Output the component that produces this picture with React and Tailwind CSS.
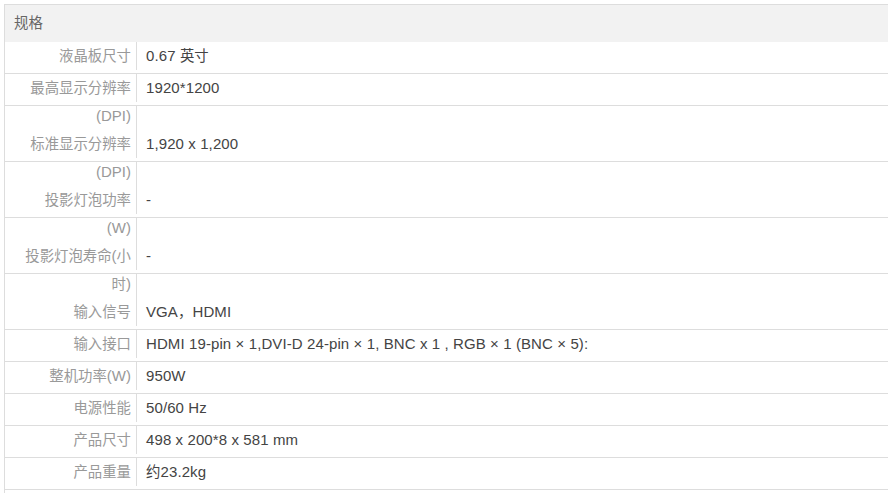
import React from "react";

const rows = [
  { tall: false, label: ["液晶板尺寸"], value: "0.67 英寸" },
  { tall: false, label: ["最高显示分辨率"], value: "1920*1200" },
  { tall: true, label: ["(DPI)", "标准显示分辨率"], value: "1,920 x 1,200" },
  { tall: true, label: ["(DPI)", "投影灯泡功率"], value: "-" },
  { tall: true, label: ["(W)", "投影灯泡寿命(小"], value: "-" },
  { tall: true, label: ["时)", "输入信号"], value: "VGA，HDMI" },
  { tall: false, label: ["输入接口"], value: "HDMI 19-pin × 1,DVI-D 24-pin × 1, BNC x 1 , RGB × 1 (BNC × 5):" },
  { tall: false, label: ["整机功率(W)"], value: "950W" },
  { tall: false, label: ["电源性能"], value: "50/60 Hz" },
  { tall: false, label: ["产品尺寸"], value: "498 x 200*8 x 581 mm" },
  { tall: false, label: ["产品重量"], value: "约23.2kg" },
];

function Mixed({ text }) {
  const parts = text.split(/([\u3000-\u9fff\uff00-\uffef]+)/).filter((p) => p !== "");
  return (
    <>
      {parts.map((p, i) =>
        /[\u3000-\u9fff\uff00-\uffef]/.test(p) ? (
          <span key={i} className="text-[14.4px]">{p}</span>
        ) : (
          <span key={i}>{p}</span>
        )
      )}
    </>
  );
}

function Row({ row }) {
  if (!row.tall) {
    return (
      <div className="flex h-[32px] border-b border-[#dddddd]">
        <div className="w-[131px] shrink-0 pr-[5px] text-right text-[#999999] leading-[28px] whitespace-nowrap">
          <Mixed text={row.label[0]} />
        </div>
        <div className="flex-1 h-[28px] border-l border-[#dddddd] pl-[9px] text-[#444444] leading-[28px] whitespace-nowrap tracking-[0.1px]">
          <Mixed text={row.value} />
        </div>
      </div>
    );
  }
  return (
    <div className="flex h-[56px] border-b border-[#dddddd]">
      <div className="w-[131px] shrink-0 pr-[5px] text-right text-[#999999] whitespace-nowrap">
        <div className="-mt-[4px] flex flex-col">
          <div className="h-[28px] leading-[28px]"><Mixed text={row.label[0]} /></div>
          <div className="h-[28px] leading-[28px]"><Mixed text={row.label[1]} /></div>
        </div>
      </div>
      <div className="flex-1 h-[52px] border-l border-[#dddddd] pl-[9px] text-[#444444] whitespace-nowrap tracking-[0.1px]">
        <div className="-mt-[4px] flex flex-col">
          <div className="h-[28px]"></div>
          <div className="h-[28px] leading-[28px]"><Mixed text={row.value} /></div>
        </div>
      </div>
    </div>
  );
}

export default function App() {
  return (
    <div
      className="w-[895px] h-[493px] overflow-hidden bg-white pt-[4px] pl-[4px] text-[15px]"
      style={{ fontFamily: '"Liberation Sans", "Noto Sans CJK SC", sans-serif' }}
    >
      <div className="w-[884px] border-l border-t border-[#dddddd]">
        <div className="h-[37px] bg-[#f2f2f2] pl-[9px] leading-[36px] text-[#666666]">
          <span className="text-[14.4px]">规格</span>
        </div>
        {rows.map((r, i) => (
          <Row key={i} row={r} />
        ))}
        <div className="h-[40px]"></div>
      </div>
    </div>
  );
}
